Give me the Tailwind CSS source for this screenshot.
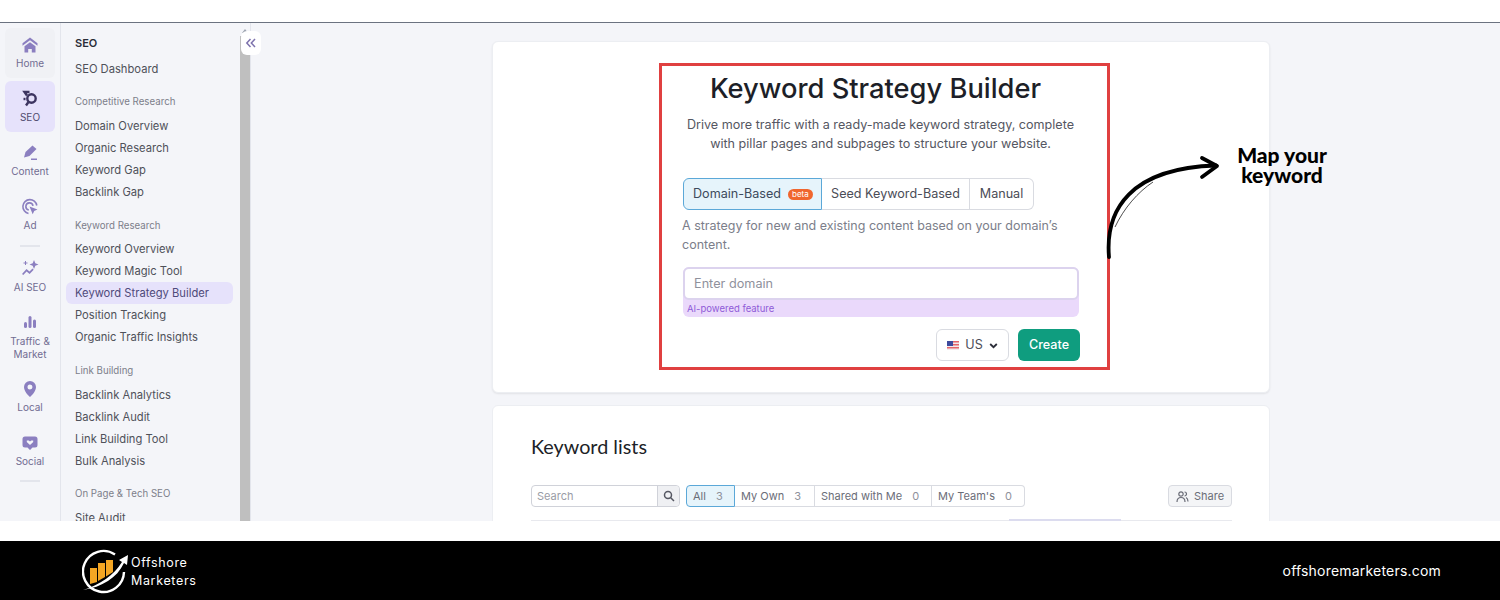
<!DOCTYPE html>
<html lang="en">
<head>
    <meta charset="UTF-8">
    <title>Keyword Strategy Builder</title>
    <script src="https://cdn.jsdelivr.net/npm/@tailwindcss/browser@4"></script>
</head>
<body class="bg-white font-['Inter',sans-serif]">
<div class="relative w-[1500px] h-[600px] overflow-hidden flex flex-col">
    <div class="h-[23px] shrink-0 bg-white border-b border-[#6b7280]"></div>

    <div class="h-[498px] shrink-0 flex overflow-hidden bg-[#f4f5f9]">
        <!-- icon rail -->
        <aside class="w-[61px] shrink-0 border-r border-[#e3e5ec] px-[5px] pt-[5px] flex flex-col text-[10px] leading-[13px] text-[#716c92]">
            <a class="h-[50px] mb-[3px] rounded-md bg-[#f0f1f5] flex flex-col items-center pt-[8px]">
                <svg class="w-[18px] h-[18px] text-[#8b7fc0]" viewBox="0 0 18 18" fill="currentColor"><path d="M9 1.500 1.500 7.200v2.600L9 4.200l7.500 5.600V7.200z"/><path d="M3.500 10.300 9 6.200l5.500 4.100v6.200h-3.700v-3.600H7.200v3.600H3.500z"/></svg>
                <span class="mt-[3px]">Home</span>
            </a>
            <a class="h-[51px] mb-[4px] rounded-md bg-[#e6e2fb] text-[#4f4a6e] flex flex-col items-center pt-[9px]">
                <svg class="w-[18px] h-[18px] text-[#3d3560]" viewBox="0 0 18 18" fill="none" stroke="currentColor" stroke-width="2.400"><path d="M8.500 2H3.500l2.500 3.500"/><path d="M4.500 9H2.500"/><circle cx="10.500" cy="8.500" r="4.200"/><path d="M7.500 12 5 15.500"/></svg>
                <span class="mt-[3px]">SEO</span>
            </a>
            <a class="h-[50px] mb-[4px] flex flex-col items-center pt-[8px]">
                <svg class="w-[18px] h-[18px] text-[#8b7fc0]" viewBox="0 0 18 18" fill="currentColor"><path d="M11.500 1.500 15.500 5 8.500 12 3 13.500 4.500 8z"/><path d="M10 14.500h6v1.500h-6z"/></svg>
                <span class="mt-[3px]">Content</span>
            </a>
            <a class="h-[50px] flex flex-col items-center pt-[8px]">
                <svg class="w-[18px] h-[18px] text-[#8b7fc0]" viewBox="0 0 18 18" fill="none" stroke="currentColor" stroke-width="1.600"><path d="M7.500 15.500A7 7 0 1 1 15.800 7.500"/><path d="M7.800 12A3.600 3.600 0 1 1 12 7.800"/><path d="m8.500 8.500 8 3-3.300 1.500-1.500 3.300z" fill="currentColor" stroke="none"/></svg>
                <span class="mt-[3px]">Ad</span>
            </a>
            <div class="w-[20px] h-[2px] bg-[#e3e5ec] mx-auto mt-[5px] mb-[4px]"></div>
            <a class="h-[62px] flex flex-col items-center pt-[8px]">
                <svg class="w-[20px] h-[18px] text-[#8b7fc0]" viewBox="0 0 20 18" fill="currentColor"><path d="m14 1 1.300 3.200L18.500 5.500 15.300 6.800 14 10l-1.300-3.200L9.500 5.500l3.200-1.300z"/><path d="M5 2h1v1.500h1.500v1H6V6H5V4.500H3.500v-1H5z"/><path d="m2 15 4.500-5 3 2.500 3-3 1.200 1.200-4.100 4.200-3-2.500-3.300 3.700z"/></svg>
                <span class="mt-[4px]">AI SEO</span>
            </a>
            <a class="h-[67px] flex flex-col items-center text-center">
                <svg class="w-[18px] h-[18px] text-[#8b7fc0]" viewBox="0 0 18 18" fill="currentColor"><rect x="3" y="9" width="3" height="6" rx="1.500"/><rect x="7.500" y="3" width="3" height="12" rx="1.500"/><rect x="12" y="6.500" width="3" height="8.500" rx="1.500"/></svg>
                <span class="mt-[4px]">Traffic &amp;<br>Market</span>
            </a>
            <a class="h-[54px] flex flex-col items-center">
                <svg class="w-[18px] h-[18px] text-[#8b7fc0]" viewBox="0 0 18 18"><path fill="currentColor" fill-rule="evenodd" d="M9 1a6 6 0 0 1 6 6c0 4-4 8.500-6 10-2-1.500-6-6-6-10a6 6 0 0 1 6-6zm0 3.500a2.500 2.500 0 1 0 0 5 2.500 2.500 0 0 0 0-5z"/></svg>
                <span class="mt-[3px]">Local</span>
            </a>
            <a class="h-[46px] flex flex-col items-center">
                <svg class="w-[18px] h-[18px] text-[#8b7fc0]" viewBox="0 0 18 18"><path fill="currentColor" d="M4 2.500h10a2.500 2.500 0 0 1 2.500 2.500v6a2.500 2.500 0 0 1-2.500 2.500h-2.500L9 16l-2.500-2.500H4A2.500 2.500 0 0 1 1.500 11V5A2.500 2.500 0 0 1 4 2.500z"/><path fill="#f4f5f9" d="M9 11 5.800 8V6.500h2l1.200 1 1.200-1h2V8z"/></svg>
                <span class="mt-[3px]">Social</span>
            </a>
            <div class="w-[20px] h-[2px] bg-[#e3e5ec] mx-auto"></div>
        </aside>

        <!-- secondary nav -->
        <nav class="w-[179px] shrink-0 pl-[5px] pr-[7px] pt-[12px] text-[11.200px] leading-[22px] text-[#4f5159]">
            <div class="pl-[9px] h-[16px] leading-[16px] text-[11px] font-semibold text-[#2b2d38]">SEO</div>
            <a class="block pl-[9px] mt-[7px]">SEO Dashboard</a>
            <div class="pl-[9px] mt-[11px] h-[22px] leading-[22px] text-[9.700px] text-[#7c7e8a]">Competitive Research</div>
            <a class="block pl-[9px] mt-[2px]">Domain Overview</a>
            <a class="block pl-[9px]">Organic Research</a>
            <a class="block pl-[9px]">Keyword Gap</a>
            <a class="block pl-[9px]">Backlink Gap</a>
            <div class="pl-[9px] mt-[12px] h-[22px] leading-[22px] text-[9.700px] text-[#7c7e8a]">Keyword Research</div>
            <a class="block pl-[9px] mt-[1px]">Keyword Overview</a>
            <a class="block pl-[9px]">Keyword Magic Tool</a>
            <a class="block pl-[9px] rounded-md bg-[#e6e2fb] text-[#4f4a7a]">Keyword Strategy Builder</a>
            <a class="block pl-[9px]">Position Tracking</a>
            <a class="block pl-[9px]">Organic Traffic Insights</a>
            <div class="pl-[9px] mt-[12px] h-[22px] leading-[22px] text-[9.700px] text-[#7c7e8a]">Link Building</div>
            <a class="block pl-[9px] mt-[2px]">Backlink Analytics</a>
            <a class="block pl-[9px]">Backlink Audit</a>
            <a class="block pl-[9px]">Link Building Tool</a>
            <a class="block pl-[9px]">Bulk Analysis</a>
            <div class="pl-[9px] mt-[11px] h-[22px] leading-[22px] text-[9.700px] text-[#7c7e8a]">On Page &amp; Tech SEO</div>
            <a class="block pl-[9px] mt-[2px]">Site Audit</a>
        </nav>

        <!-- scrollbar -->
        <div class="relative w-[11px] shrink-0 border-r border-[#e3e5ec] flex flex-col">
            <div class="h-[13px] flex justify-center pt-[6px]">
                <div class="w-0 h-0 border-x-[3px] border-x-transparent border-b-[4px] border-b-[#9ca3af]"></div>
            </div>
            <div class="flex-1 bg-[#bfbfbf]"></div>
            <button class="absolute left-[1px] top-[8px] w-[20px] h-[24px] rounded-md bg-white flex items-center justify-center text-[#7d72ad]">
                <svg class="w-[12px] h-[12px]" viewBox="0 0 12 12" fill="none" stroke="currentColor" stroke-width="1.500"><path d="M5.500 2 1.800 6l3.700 4M10 2 6.300 6l3.700 4"/></svg>
            </button>
        </div>

        <!-- main -->
        <main class="flex-1 pl-[241px] pt-[18px]">
            <section class="w-[778px] h-[352px] bg-white rounded-md border border-[#eceef2] shadow-[0_1px_2px_rgba(0,0,0,0.08)] pt-[21px] pl-[166px]">
                <div class="w-[451px] h-[307px] border-[3px] border-[#e04040] pl-[21px] pr-[27px] flex flex-col">
                    <h1 class="h-[36px] shrink-0 mt-[5px] text-center pr-[12px] text-[27.300px] leading-[36px] font-medium text-[#1d1f28]">Keyword Strategy Builder</h1>
                    <p class="mt-[8px] shrink-0 text-center pr-[2px] whitespace-nowrap text-[12.600px] leading-[19px] text-[#555762]">Drive more traffic with a ready-made keyword strategy, complete<br>with pillar pages and subpages to structure your website.</p>
                    <div class="mt-[25px] flex shrink-0 h-[32px] w-[351px] text-[12.600px] text-[#4b4d57]">
                        <div class="w-[139px] rounded-l-md border border-[#5ba8d8] bg-[#e6f4fb] flex items-center pl-[9px] gap-[7px] text-[#3d4a5c]">
                            <span>Domain-Based</span>
                            <span class="h-[11px] px-[4px] rounded-full bg-[#f0662e] text-white text-[8px] leading-[11px]">beta</span>
                        </div>
                        <div class="w-[148px] border-y border-r border-[#d9dbe1] flex items-center justify-center">Seed Keyword-Based</div>
                        <div class="w-[64px] rounded-r-md border-y border-r border-[#d9dbe1] flex items-center justify-center">Manual</div>
                    </div>
                    <p class="mt-[6px] -ml-[1px] shrink-0 whitespace-nowrap text-[12.500px] leading-[19px] text-[#7c7e8a]">A strategy for new and existing content based on your domain’s<br>content.</p>
                    <div class="mt-[13px] shrink-0 w-[396px] h-[50px] rounded-md bg-[#ead9fb]">
                        <div class="h-[33px] rounded-md bg-white border-2 border-[#dcd3ee] flex items-center pl-[9px] text-[12.700px] text-[#8f919c]">Enter domain</div>
                        <div class="pl-[4px] h-[17px] text-[9.500px] leading-[18px] text-[#8f5bd8]">AI-powered feature</div>
                    </div>
                    <div class="mt-[12px] shrink-0 flex justify-end gap-[9px]">
                        <div class="w-[73px] h-[32px] pt-[1px] rounded-md border border-[#d9dbe1] flex items-center justify-center gap-[6px] text-[12.600px] text-[#4b4d57]">
                            <svg class="w-[12px] h-[9px]" viewBox="0 0 12 9"><rect width="12" height="9" fill="#e5646a"/><rect y="1.500" width="12" height="1.500" fill="#f3e9ea"/><rect y="4.500" width="12" height="1.500" fill="#f3e9ea"/><rect y="7.500" width="12" height="1.500" fill="#f3e9ea"/><rect width="6" height="5" fill="#3e4a9c"/></svg>
                            <span>US</span>
                            <svg class="w-[9px] h-[9px] text-[#2b2d38]" viewBox="0 0 9 9" fill="none" stroke="currentColor" stroke-width="1.800"><path d="m1.200 3 3.300 3.200L7.800 3"/></svg>
                        </div>
                        <button class="w-[62px] h-[32px] pt-[1px] rounded-md bg-[#0f9d7f] text-white text-[12.600px] font-medium">Create</button>
                    </div>
                </div>
            </section>

            <section class="mt-[12px] w-[778px] h-[200px] bg-white rounded-t-md border border-[#eceef2] pl-[38px] pr-[37px]">
                <h2 class="mt-[27px] h-[26px] text-[19.800px] leading-[26px] text-[#1d1f28] font-['Lato',sans-serif]">Keyword lists</h2>
                <div class="mt-[26px] flex items-center text-[11px] text-[#6b6d78]">
                    <div class="w-[149px] h-[22px] rounded-[4px] border border-[#d0d2d9] flex">
                        <span class="flex-1 pl-[5px] leading-[20px] text-[#9a9ca6]">Search</span>
                        <span class="w-[22px] border-l border-[#d0d2d9] bg-[#eff0f3] flex items-center justify-center rounded-r-[4px]">
                            <svg class="w-[12px] h-[12px] text-[#555762]" viewBox="0 0 12 12" fill="none" stroke="currentColor" stroke-width="1.500"><circle cx="5" cy="5" r="3.500"/><path d="m7.500 7.500 3.500 3.500"/></svg>
                        </span>
                    </div>
                    <div class="ml-[6px] flex h-[22px] w-[339px]">
                        <div class="w-[49px] rounded-l-[4px] border border-[#5ba8d8] bg-[#e6f4fb] flex items-center pl-[6px] gap-[10px]"><span>All</span><span class="text-[#8f919c]">3</span></div>
                        <div class="w-[80px] border-y border-r border-[#d9dbe1] flex items-center pl-[6px] gap-[10px]"><span>My Own</span><span class="text-[#8f919c]">3</span></div>
                        <div class="w-[117px] border-y border-r border-[#d9dbe1] flex items-center pl-[6px] gap-[10px]"><span>Shared with Me</span><span class="text-[#8f919c]">0</span></div>
                        <div class="w-[93px] rounded-r-[4px] border-y border-r border-[#d9dbe1] flex items-center pl-[6px] gap-[10px]"><span>My Team's</span><span class="text-[#8f919c]">0</span></div>
                    </div>
                    <div class="ml-auto w-[64px] h-[22px] rounded-[4px] border border-[#d9dbe1] bg-[#f4f5f7] flex items-center justify-center gap-[5px]">
                        <svg class="w-[13px] h-[13px]" viewBox="0 0 13 13" fill="none" stroke="currentColor" stroke-width="1.200"><circle cx="5" cy="4" r="2.200"/><path d="M1 12c0-3 1.500-4.500 4-4.500S9 9 9 12"/><path d="M8.500 2a2 2 0 0 1 0 4M10 7.500c1.300.6 2 2 2 4"/></svg>
                        <span>Share</span>
                    </div>
                </div>
                <div class="relative mt-[13px] h-[1px] bg-[#e8e9ee]">
                    <div class="absolute left-[478px] -top-[1px] w-[112px] h-[2px] bg-[#dcdcef]"></div>
                </div>
            </section>
        </main>
    </div>

    <div class="h-[20px] shrink-0 bg-white"></div>

    <footer class="flex-1 bg-black flex items-center justify-between pl-[82px] pr-[59px] text-white">
        <div class="flex items-center gap-[3px]">
            <svg class="w-[46px] h-[46px]" viewBox="0 0 46 46" fill="none">
                <path d="M33 6.500A20.500 20.500 0 1 0 42 24" stroke="#fff" stroke-width="2.400"/>
                <path d="M8 20h7v14l-7 2z" fill="#f5a623"/>
                <path d="M16 15h7v14l-7 4z" fill="#f5a623"/>
                <path d="M24 12h7v12l-7 4.500z" fill="#f5a623"/>
                <path d="M1 42C18 37 32 27 40 14l-3-2 9-5-1 10-3-2C35 30 20 39 1 42z" fill="#fff"/>
            </svg>
            <div class="pt-[2px] text-[12.500px] leading-[18px] tracking-[0.65px]">Offshore<br>Marketers</div>
        </div>
        <div class="pb-[1px] text-[14px] tracking-[0.2px]">offshoremarketers.com</div>
    </footer>

    <!-- annotation on top of the page -->
    <svg class="absolute left-[1100px] top-[150px] w-[125px] h-[115px]" viewBox="0 0 125 115" fill="none">
        <path d="M9 107C5 60 30 18 116 15.500" stroke="#000" stroke-width="3.800" stroke-linecap="round"/>
        <path d="M102 8 117 16 102 27" stroke="#000" stroke-width="3.800" stroke-linecap="round" stroke-linejoin="round"/>
        <path d="M15 77C24 58 38 42 53 32" stroke="#000" stroke-width="0.700"/>
    </svg>
    <div class="absolute left-[1222px] top-[145px] w-[120px] text-center text-[21px] leading-[20px] font-black text-black font-['Lato',sans-serif]">Map your<br>keyword</div>
</div>
</body>
</html>
